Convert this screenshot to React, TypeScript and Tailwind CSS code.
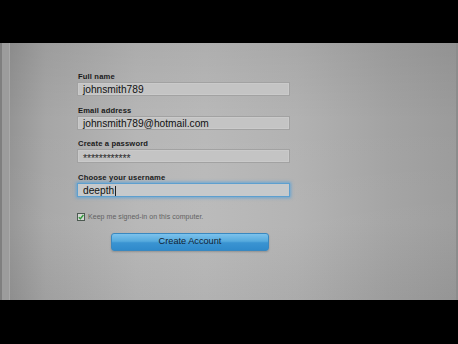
import React from "react";

const Field = ({
  label,
  children,
  focused,
}: {
  label: string;
  children: React.ReactNode;
  focused?: boolean;
}) => (
  <div className="flex flex-col">
    <div className="h-[10px] leading-[10px] text-[7.6px] font-bold text-[#1a1a1a] pl-[1px] tracking-[0.15px]">
      {label}
    </div>
    <div
      className={
        "h-[14px] w-[213px] box-border flex items-start pl-[5px] pt-[1px] text-[10.2px] leading-[12px] text-[#111] " +
        (focused
          ? "border border-[#5d9fcf] bg-[#c6c9cb] shadow-[0_0_3px_1px_rgba(80,160,220,0.75)]"
          : "border border-[#a2a2a2] bg-[#c4c4c4] shadow-[inset_0_0_0_1px_rgba(215,215,215,0.35)]")
      }
    >
      {children}
    </div>
  </div>
);

export default function App() {
  return (
    <div className="w-[458px] h-[344px] bg-black flex flex-col font-['Liberation_Sans',Arial,sans-serif]">
      <div className="h-[43px] shrink-0" />
      <div className="h-[257px] shrink-0 flex border-r-2 border-[#8c8c8c] bg-[linear-gradient(90deg,#8f8f8f_0%,#a6a6a6_10%,#b6b6b6_30%,#b9b9b9_45%,#b2b2b2_65%,#a3a3a3_85%,#9b9b9b_100%)]">
        <div className="w-[10px] shrink-0 border-l-2 border-[#7f7f7f] border-r border-r-[#a9a9a9] bg-[#9c9c9c]" />
        <div className="flex-1 pl-[67px] pt-[29px] flex flex-col bg-[linear-gradient(180deg,rgba(0,0,0,0.06)_0%,rgba(0,0,0,0)_30%,rgba(255,255,255,0.03)_70%,rgba(0,0,0,0.04)_100%)]">
          <div className="flex flex-col gap-[9.5px]">
            <Field label="Full name">johnsmith789</Field>
            <Field label="Email address">johnsmith789@hotmail.com</Field>
            <Field label="Create a password">
              <span className="text-[10.4px] leading-[12px] mt-[2px] tracking-[-0.1px] text-[#2a2a2a]">************</span>
            </Field>
            <Field label="Choose your username" focused>
              <span>deepth</span>
              <span className="w-px h-[10px] bg-[#222] ml-[1px] mt-[1px]" />
            </Field>
          </div>
          <div className="mt-[16.5px] h-[7px] flex items-center gap-[3px]">
            <svg width="8" height="8" viewBox="0 0 8 8" className="shrink-0">
              <rect x="0.5" y="0.5" width="7" height="7" fill="#d4d8d4" stroke="#4d5a52" strokeWidth="1" />
              <path d="M1.8 4.2 L3.4 5.8 L6.4 2" fill="none" stroke="#2f9a3a" strokeWidth="1.4" />
            </svg>
            <span className="text-[7px] leading-[8px] text-[#626262] tracking-[0.05px]">
              Keep me signed-in on this computer.
            </span>
          </div>
          <div className="mt-[13px] ml-[34px] w-[158px] h-[17.5px] rounded-[3px] border border-[#3a88bf] bg-[linear-gradient(180deg,#7cc2ec_0%,#56aadd_45%,#3a94d2_55%,#2f8acb_100%)] shadow-[0_1px_2px_rgba(0,0,0,0.2)] flex items-center justify-center text-[9.2px] text-[#112233]">
            Create Account
          </div>
        </div>
      </div>
      <div className="flex-1" />
    </div>
  );
}
